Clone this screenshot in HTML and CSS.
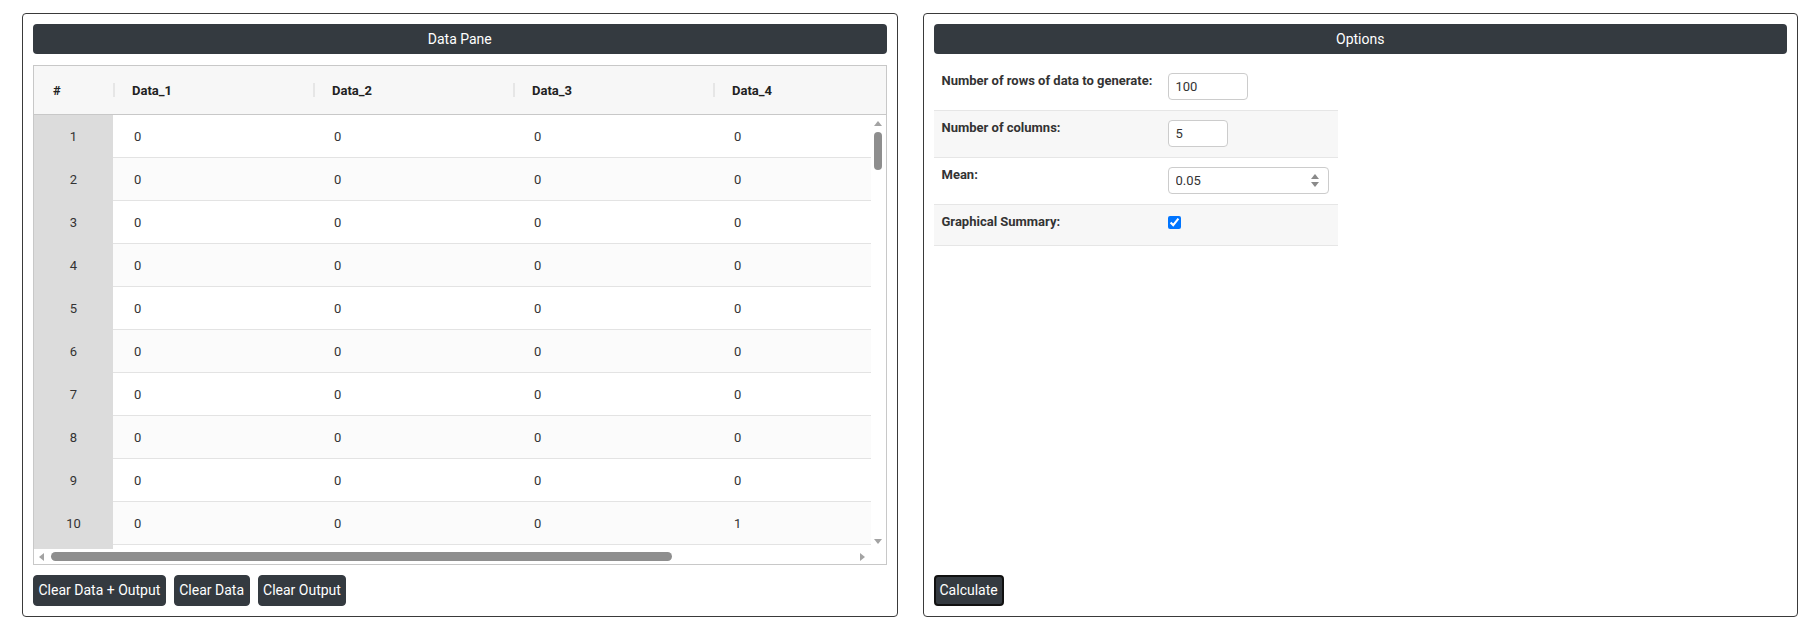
FILE: index.html
```html
<!DOCTYPE html>
<html lang="en">
<head>
  <meta charset="UTF-8"/>
  <title>Data Generator</title>
  <link rel="stylesheet" href="styles.css">
</head>
<body>

  <div class="page">

    <!-- Data pane -->
    <div class="panel">
      <div class="panel-title">Data Pane</div>

      <div class="grid">
        <div class="grid-head">
          <div class="hcell num">#</div>
          <div class="hcell">Data_1</div>
          <div class="hcell">Data_2</div>
          <div class="hcell">Data_3</div>
          <div class="hcell">Data_4</div>
        </div>

        <div class="grid-main">
          <div class="grid-body">
            <div class="row"><div class="cell num">1</div><div class="cell">0</div><div class="cell">0</div><div class="cell">0</div><div class="cell">0</div></div>
            <div class="row"><div class="cell num">2</div><div class="cell">0</div><div class="cell">0</div><div class="cell">0</div><div class="cell">0</div></div>
            <div class="row"><div class="cell num">3</div><div class="cell">0</div><div class="cell">0</div><div class="cell">0</div><div class="cell">0</div></div>
            <div class="row"><div class="cell num">4</div><div class="cell">0</div><div class="cell">0</div><div class="cell">0</div><div class="cell">0</div></div>
            <div class="row"><div class="cell num">5</div><div class="cell">0</div><div class="cell">0</div><div class="cell">0</div><div class="cell">0</div></div>
            <div class="row"><div class="cell num">6</div><div class="cell">0</div><div class="cell">0</div><div class="cell">0</div><div class="cell">0</div></div>
            <div class="row"><div class="cell num">7</div><div class="cell">0</div><div class="cell">0</div><div class="cell">0</div><div class="cell">0</div></div>
            <div class="row"><div class="cell num">8</div><div class="cell">0</div><div class="cell">0</div><div class="cell">0</div><div class="cell">0</div></div>
            <div class="row"><div class="cell num">9</div><div class="cell">0</div><div class="cell">0</div><div class="cell">0</div><div class="cell">0</div></div>
            <div class="row"><div class="cell num">10</div><div class="cell">0</div><div class="cell">0</div><div class="cell">0</div><div class="cell">1</div></div>
            <div class="row"><div class="cell num"></div><div class="cell"></div><div class="cell"></div><div class="cell"></div><div class="cell"></div></div>
          </div>
          <div class="vbar">
            <span class="arrow up"></span>
            <span class="vthumb"></span>
            <span class="vspace"></span>
            <span class="arrow down"></span>
          </div>
        </div>

        <div class="grid-foot">
          <div class="hbar">
            <span class="arrow left"></span>
            <span class="hthumb"></span>
            <span class="hspace"></span>
            <span class="arrow right"></span>
          </div>
          <div class="corner"></div>
        </div>
      </div>

      <div class="buttons">
        <button class="btn">Clear Data + Output</button>
        <button class="btn">Clear Data</button>
        <button class="btn">Clear Output</button>
      </div>
    </div>

    <!-- Options -->
    <div class="panel">
      <div class="panel-title">Options</div>

      <div class="options">
        <div class="opt-row">
          <label class="opt-label" for="rows">Number of rows of data to generate:</label>
          <div class="opt-field"><input class="field w-rows" type="text" id="rows" value="100"></div>
        </div>
        <div class="opt-row alt">
          <label class="opt-label" for="cols">Number of columns:</label>
          <div class="opt-field"><input class="field w-cols" type="text" id="cols" value="5"></div>
        </div>
        <div class="opt-row">
          <label class="opt-label" for="mean">Mean:</label>
          <div class="opt-field">
            <div class="spin">
              <input type="text" id="mean" value="0.05">
              <span class="spin-arrows"><span class="arrow up"></span><span class="arrow down"></span></span>
            </div>
          </div>
        </div>
        <div class="opt-row alt">
          <label class="opt-label" for="summary">Graphical Summary:</label>
          <div class="opt-field check"><input type="checkbox" id="summary" checked></div>
        </div>
      </div>

      <button class="btn calc">Calculate</button>
    </div>

  </div>

</body>
</html>
```

FILE: styles.css
```css
* { box-sizing: border-box; margin: 0; padding: 0; }
body, html { height: 100%; font-family: Roboto, 'Liberation Sans', sans-serif; color: #333; background: #fff; overflow: hidden; }

.page {
  display: flex;
  gap: 25px;
  padding: 13px 18px 0 22px;
}

.panel {
  flex: 1 1 0;
  min-width: 0;
  display: flex;
  flex-direction: column;
  border: 1px solid #3a3a3a;
  border-radius: 4px;
  padding: 10px;
  height: 604px;
}

.panel-title {
  height: 30px;
  line-height: 30px;
  background: #343a40;
  color: #fff;
  text-align: center;
  font-size: 14px;
  border-radius: 4px;
}

/* data grid */
.grid {
  margin-top: 11px;
  border: 1px solid #c8c8c8;
  display: flex;
  flex-direction: column;
  overflow: hidden;
}

.grid-head {
  display: flex;
  height: 49px;
  background: #f7f7f7;
  border-bottom: 1px solid #c8c8c8;
  overflow: hidden;
}

.hcell {
  flex: 0 0 200px;
  display: flex;
  align-items: center;
  padding-left: 19px;
  font-size: 13px;
  font-weight: 700;
  color: #222;
  position: relative;
}

.hcell::before {
  content: "";
  position: absolute;
  left: 0;
  top: 17px;
  height: 14px;
  width: 2px;
  background: #e6e6e6;
}

.hcell.num { flex-basis: 79px; padding-left: 19px; }
.hcell.num::before { display: none; }

.grid-main {
  display: flex;
  height: 434px;
}

.grid-body {
  flex: 1;
  min-width: 0;
  overflow: hidden;
}

.row {
  display: flex;
  height: 43px;
}

.row:nth-child(even) .cell { background: #fbfbfb; }

.cell {
  flex: 0 0 200px;
  display: flex;
  align-items: center;
  padding-left: 21px;
  font-size: 13px;
  color: #333;
  border-bottom: 1px solid #e3e3e3;
  background: #fff;
}

.row .cell.num {
  flex-basis: 79px;
  justify-content: center;
  padding-left: 0;
  background: #dcdcdc;
  border-bottom-color: #dcdcdc;
}

/* scrollbars */
.vbar {
  flex: 0 0 15px;
  display: flex;
  flex-direction: column;
  align-items: center;
  padding: 6px 0 5px;
  background: #fff;
}

.vthumb {
  width: 8px;
  height: 38px;
  margin-top: 6px;
  border-radius: 4px;
  background: #8e8e8e;
}

.vspace, .hspace { flex: 1; }

.grid-foot {
  display: flex;
  height: 15px;
}

.hbar {
  flex: 1;
  min-width: 0;
  display: flex;
  align-items: center;
  padding: 0 6px 0 5px;
}

.hthumb {
  width: 621px;
  height: 9px;
  margin-left: 7px;
  border-radius: 5px;
  background: #8e8e8e;
}

.corner { flex: 0 0 15px; }

.arrow {
  width: 0;
  height: 0;
  border: 4px solid transparent;
}
.arrow.up { border-bottom: 5px solid #a3a3a3; border-top-width: 0; }
.arrow.down { border-top: 5px solid #a3a3a3; border-bottom-width: 0; }
.arrow.left { border-right: 5px solid #a3a3a3; border-left-width: 0; }
.arrow.right { border-left: 5px solid #a3a3a3; border-right-width: 0; }

/* buttons */
.buttons {
  display: flex;
  gap: 8px;
  margin-top: 10px;
}

.btn {
  font-family: Roboto, 'Liberation Sans', sans-serif;
  font-size: 14px;
  line-height: 21px;
  padding: 4px 4.5px;
  color: #fff;
  background: #343a40;
  border: 1px solid #343a40;
  border-radius: 4px;
  cursor: pointer;
}

.btn.calc {
  margin-top: auto;
  align-self: flex-start;
  border: 2px solid #111;
  padding: 3px 4px;
}

/* options */
.options {
  width: 404px;
  margin-top: 10px;
}

.opt-row {
  display: flex;
  border-bottom: 1px solid #e6e6e6;
}

.opt-row.alt { background: #f7f7f7; }

.opt-label {
  flex: 0 0 234px;
  padding: 9px 8px 0;
  font-size: 13px;
  line-height: 16px;
  font-weight: 700;
  color: #333;
}

.opt-field {
  padding: 9px 0 10px;
}

.opt-field.check {
  padding: 11px 0 16px;
}

.opt-field input[type="checkbox"] {
  display: block;
  width: 13px;
  height: 13px;
  margin: 0;
  accent-color: #0075ff;
}

.field, .spin {
  height: 27px;
  border: 1px solid #ccc;
  border-radius: 4px;
  font-family: Roboto, 'Liberation Sans', sans-serif;
  font-size: 13px;
  color: #333;
  background: #fff;
}

.field { padding: 0 7px; }
.w-rows { width: 80px; }
.w-cols { width: 60px; }

.spin {
  width: 161px;
  display: flex;
  align-items: center;
  padding: 0 9px 0 7px;
}

.spin input {
  flex: 1;
  min-width: 0;
  border: none;
  outline: none;
  background: transparent;
  font: inherit;
  color: inherit;
}

.spin-arrows {
  display: flex;
  flex-direction: column;
  gap: 3px;
}

.spin-arrows .arrow { border-width: 4px; }
.spin-arrows .arrow.up { border-bottom: 5px solid #8a8a8a; border-top-width: 0; }
.spin-arrows .arrow.down { border-top: 5px solid #8a8a8a; border-bottom-width: 0; }
```
